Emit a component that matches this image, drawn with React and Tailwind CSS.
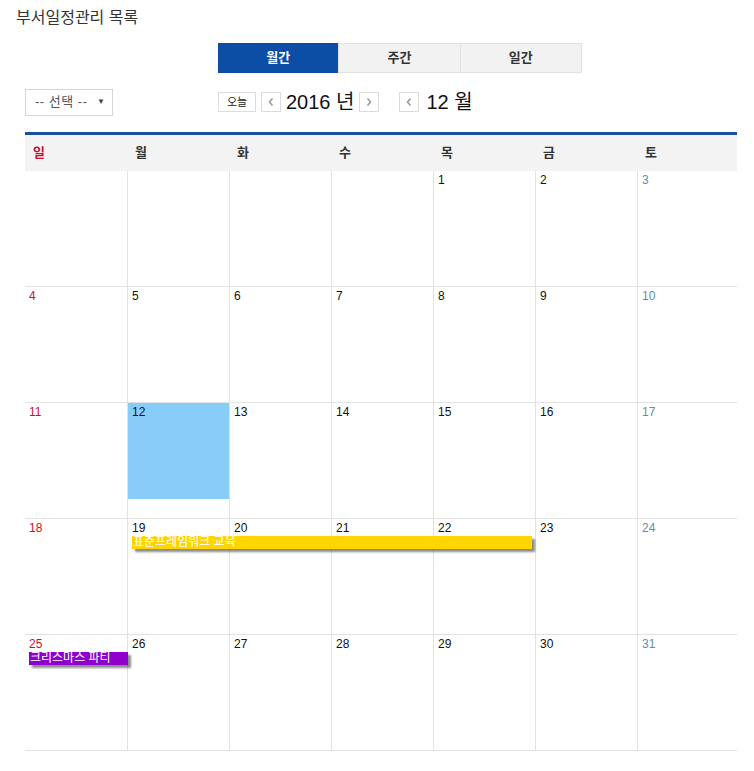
import React from 'react';

const FONT = { fontFamily: '"Liberation Sans", "Noto Sans CJK KR", sans-serif' };

const DAY_NAMES = ['일', '월', '화', '수', '목', '금', '토'];

// 2016년 12월: 1일은 목요일
const WEEKS = [
  [null, null, null, null, 1, 2, 3],
  [4, 5, 6, 7, 8, 9, 10],
  [11, 12, 13, 14, 15, 16, 17],
  [18, 19, 20, 21, 22, 23, 24],
  [25, 26, 27, 28, 29, 30, 31],
];

const TODAY = 12;

const Chevron = ({ dir }) => (
  <svg width="8" height="10" viewBox="0 0 8 10">
    <path
      d={dir === 'left' ? 'M5.5 1.5 L2.5 5 L5.5 8.5' : 'M2.5 1.5 L5.5 5 L2.5 8.5'}
      fill="none"
      stroke="#9a9a9a"
      strokeWidth="1.6"
    />
  </svg>
);

const NavButton = ({ dir }) => (
  <button className="w-[20px] h-[20px] border border-[#dcdcdc] bg-white flex items-center justify-center">
    <Chevron dir={dir} />
  </button>
);

const Tabs = () => (
  <div className="flex ml-[218px] mt-[15px] h-[30px] w-[364px]">
    <div className="flex-1 bg-[#0c4da5] text-white text-[13px] font-bold flex items-center justify-center">월간</div>
    <div className="flex-1 bg-[#f2f2f2] border border-[#e2e2e2] text-[#333] text-[13px] font-bold flex items-center justify-center">주간</div>
    <div className="flex-1 bg-[#f2f2f2] border border-l-0 border-[#e2e2e2] text-[#333] text-[13px] font-bold flex items-center justify-center">일간</div>
  </div>
);

const Toolbar = () => (
  <div className="flex items-center mt-[15px] h-[28px]">
    <div className="ml-[25px] w-[88px] h-[27px] border border-[#d6d6d6] bg-white flex items-center justify-between pl-[9px] pr-[7px] text-[13px] text-[#555]">
      <span className="tracking-[0.5px]">-- 선택 --</span>
      <span className="text-[8px] text-[#444]">▼</span>
    </div>
    <div className="ml-[105px] flex items-center">
      <button className="h-[20px] w-[38px] border border-[#dcdcdc] bg-white text-[11px] text-[#222] flex items-center justify-center">오늘</button>
      <div className="ml-[5px]"><NavButton dir="left" /></div>
      <span className="mx-[5px] text-[20px] text-[#111] leading-none">2016 년</span>
      <NavButton dir="right" />
      <div className="ml-[20px]"><NavButton dir="left" /></div>
      <span className="ml-[7px] text-[20px] text-[#111] leading-none">12 월</span>
    </div>
  </div>
);

const dateColor = (col) => {
  if (col === 0) return 'text-[#c8102e]';
  if (col === 6) return 'text-[#5b8fab]';
  return 'text-[#111]';
};

const EventBar = ({ className, children }) => (
  <div className={`absolute h-[13px] text-white text-[12px] leading-[13px] pl-[1px] whitespace-nowrap shadow-[3px_3px_2px_rgba(0,0,0,0.45)] ${className}`}>
    {children}
  </div>
);

const Week = ({ days, index }) => (
  <div className="relative grid grid-cols-[102px_102px_102px_102px_102px_102px_100px] h-[116px] border-b border-[#e2e2e2]">
    {days.map((d, col) => (
      <div key={col} className={`relative ${col > 0 ? 'border-l border-[#e2e2e2]' : ''}`}>
        {d === TODAY && <div className="absolute left-0 top-0 right-0 h-[96px] bg-[#88cdf9]" />}
        {d && (
          <span className={`relative block pl-[4px] pt-[3px] text-[12px] leading-[13px] ${dateColor(col)}`}>{d}</span>
        )}
      </div>
    ))}
    {index === 3 && (
      <EventBar className="left-[107px] top-[17px] w-[400px] bg-[#ffd500]">표준프레임워크 교육</EventBar>
    )}
    {index === 4 && (
      <EventBar className="left-[4px] top-[17px] w-[99px] bg-[#9000cc]">크리스마스 파티</EventBar>
    )}
  </div>
);

const Calendar = () => (
  <div className="ml-[25px] mt-[16px] w-[712px] border-t-[3px] border-[#1a4e9e]">
    <div className="grid grid-cols-[102px_102px_102px_102px_102px_102px_100px] h-[36px] bg-[#f3f3f3]">
      {DAY_NAMES.map((n, i) => (
        <div
          key={n}
          className={`flex items-center pl-[8px] text-[13px] font-bold ${i === 0 ? 'text-[#c8102e]' : 'text-[#333]'}`}
        >
          {n}
        </div>
      ))}
    </div>
    {WEEKS.map((w, i) => (
      <Week key={i} days={w} index={i} />
    ))}
  </div>
);

export default function App() {
  return (
    <div className="w-[754px] min-h-[771px] bg-white" style={FONT}>
      <div className="pt-[8px] pl-[16px] text-[16px] text-[#333] leading-[20px]">부서일정관리 목록</div>
      <Tabs />
      <Toolbar />
      <Calendar />
    </div>
  );
}
